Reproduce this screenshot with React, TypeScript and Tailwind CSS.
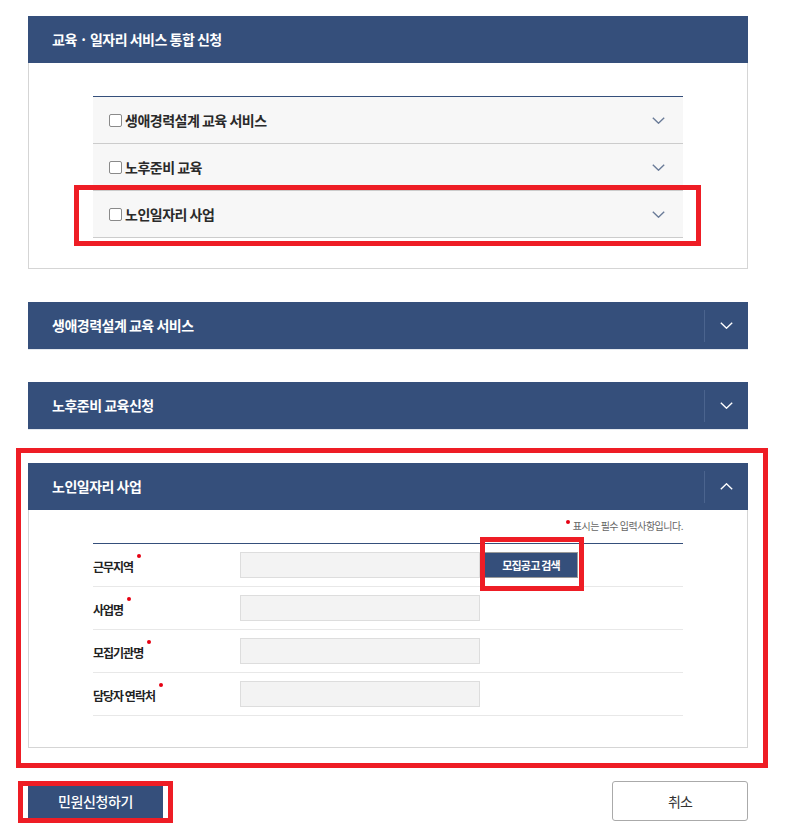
import React from 'react';

const NAVY = 'bg-[#354f7b]';

function Chevron({ up = false, className = '' }: { up?: boolean; className?: string }) {
  return (
    <svg width="13" height="7" viewBox="0 0 13 7" className={className} fill="none">
      <path
        d={up ? 'M0.8 6.3 L6.5 0.8 L12.2 6.3' : 'M0.8 0.7 L6.5 6.2 L12.2 0.7'}
        stroke="currentColor"
        strokeWidth="1.4"
      />
    </svg>
  );
}

function SectionHeader({ title, toggle, up }: { title: string; toggle?: boolean; up?: boolean }) {
  return (
    <div className={`h-[47px] ${NAVY} flex items-center text-white`}>
      <div className="flex-1 pl-[24px] text-[14px] font-bold tracking-[-0.5px]">{title}</div>
      {toggle && (
        <div className="w-[44px] h-[32px] border-l border-[#4b648e] flex items-center justify-center">
          <Chevron up={up} className="text-white" />
        </div>
      )}
    </div>
  );
}

const services = ['생애경력설계 교육 서비스', '노후준비 교육', '노인일자리 사업'];
const fields = ['근무지역', '사업명', '모집기관명', '담당자 연락처'];

function RedBox({ className }: { className: string }) {
  return <div className={`absolute border-[5px] border-[#ee1d25] pointer-events-none ${className}`} />;
}

export default function App() {
  return (
    <div
      className="relative w-[795px] min-h-[836px] bg-white text-[#222]"
      style={{ fontFamily: '"Noto Sans CJK KR", "Noto Sans", sans-serif' }}
    >
      <div className="ml-[28px] w-[720px] pt-[16px]">
        {/* 통합 신청 */}
        <SectionHeader title="교육 · 일자리 서비스 통합 신청" />
        <div className="border border-t-0 border-[#d5d5d5] px-[64px] pt-[33px] pb-[30px]">
          <div className="border-t border-[#354f7b]">
            {services.map((s) => (
              <div
                key={s}
                className="h-[47px] bg-[#f7f7f7] border-b border-[#cccccc] flex items-center pl-[16px] pr-[18px]"
              >
                <span className="w-[13px] h-[13px] border border-[#8a8a8a] rounded-[2px] bg-white mr-[3px]" />
                <span className="flex-1 text-[14px] font-bold tracking-[-0.5px] text-[#2a2a2a]">{s}</span>
                <Chevron className="text-[#6a7b98]" />
              </div>
            ))}
          </div>
        </div>

        <div className="mt-[33px] border-b border-[#e4e8ee]">
          <SectionHeader title="생애경력설계 교육 서비스" toggle />
        </div>

        <div className="mt-[32px] border-b border-[#e4e8ee]">
          <SectionHeader title="노후준비 교육신청" toggle />
        </div>

        {/* 노인일자리 사업 */}
        <div className="mt-[33px]">
          <SectionHeader title="노인일자리 사업" toggle up />
          <div className="border border-t-0 border-[#d5d5d5] px-[64px] pt-[8px] pb-[31px]">
            <div className="flex justify-end items-start h-[15px] mb-[10px] text-[10px] leading-[15px] tracking-[-0.5px] text-[#666]">
              <span className="w-[4px] h-[4px] rounded-full bg-[#e60012] mt-[2px] mr-[3px]" />
              표시는 필수 입력사항입니다.
            </div>
            <div className="border-t border-[#354f7b]">
              {fields.map((f, i) => (
                <div key={f} className="h-[43px] border-b border-[#e8e8e8] flex items-center">
                  <div className="w-[147px] flex items-start">
                    <span className="text-[12px] font-bold tracking-[-1px] text-[#222] mt-[4px]">{f}</span>
                    <span className="w-[4px] h-[4px] rounded-full bg-[#e60012] ml-[4px]" />
                  </div>
                  <div className="w-[240px] h-[26px] bg-[#f3f3f3] border border-[#dddddd]" />
                  {i === 0 && (
                    <button className="ml-[4px] w-[94px] h-[26px] bg-[#354f7b] border border-[#9a9a9a] text-white text-[11px] font-bold tracking-[-0.8px]">
                      모집공고 검색
                    </button>
                  )}
                </div>
              ))}
            </div>
          </div>
        </div>

        <div className="mt-[33px] flex justify-between items-center">
          <button className={`w-[135px] h-[40px] ${NAVY} text-white text-[14px] font-medium tracking-[-0.4px]`}>
            민원신청하기
          </button>
          <button className="w-[136px] h-[40px] bg-white border border-[#aaaaaa] rounded-[3px] text-[14px] tracking-[-1px] text-[#333]">
            취소
          </button>
        </div>
      </div>

      <RedBox className="left-[74px] top-[185px] w-[627px] h-[61px]" />
      <RedBox className="left-[16px] top-[448px] w-[752px] h-[320px]" />
      <RedBox className="left-[480px] top-[537px] w-[104px] h-[54px]" />
      <RedBox className="left-[18px] top-[781px] w-[155px] h-[42px]" />
    </div>
  );
}
